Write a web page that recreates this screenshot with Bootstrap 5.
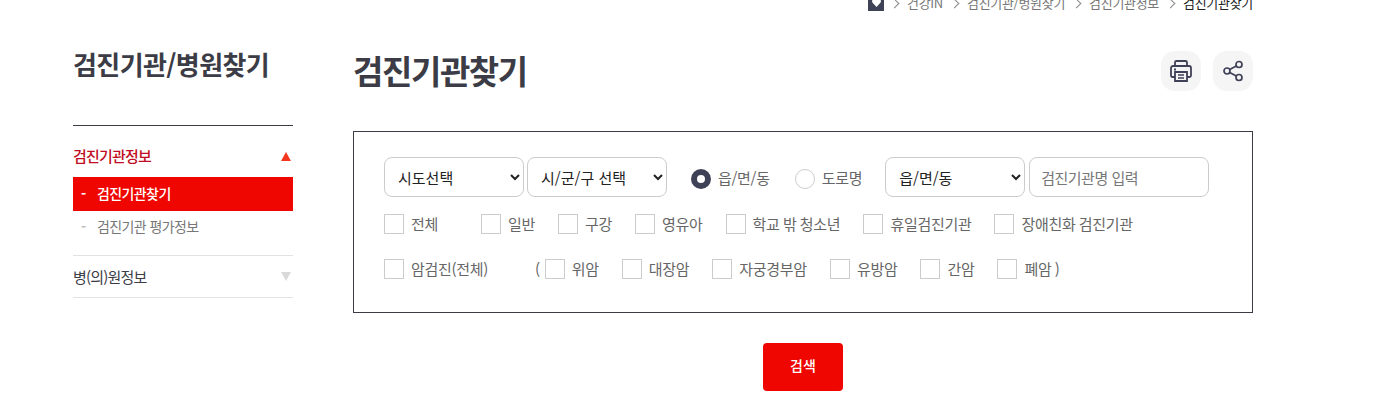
<!DOCTYPE html>
<html lang="ko">
<head>
    <meta charset="UTF-8">
    <title>검진기관찾기</title>
    <link href="https://cdn.jsdelivr.net/npm/bootstrap@5.3.0/dist/css/bootstrap.min.css" rel="stylesheet">
    <style>
        body {
          font-family: "Noto Sans CJK KR", "Noto Sans", sans-serif;
          font-size: 15px;
          color: #3c3c46;
          letter-spacing: -0.3px;
          overflow: hidden;
        }
        .page-wrap { width: 1180px; margin-left: 73px; }
        .crumbs { height: 6px; font-size: 13px; color: #777; gap: 8px; line-height: 10px; }
        .crumbs .now { color: #222; }
        .crumb-sep { width: 7px; height: 7px; border-top: 1px solid #888; border-right: 1px solid #888; transform: rotate(45deg); margin-right: 1px; }
        .home-ico { width: 16px; height: 16px; background: #3f4156; margin-right: -1px; }
        .side { width: 220px; margin-right: 60px; }
        .side-title { font-size: 26px; font-weight: 700; line-height: 38px; margin: 0 0 42px; letter-spacing: -0.6px; padding-top: 39px; }
        .side-group { border-top: 1px solid #3c3c46; padding-top: 20px; }
        .side-head { font-size: 15px; height: 20px; line-height: 20px; letter-spacing: -0.8px; padding-right: 2px; }
        .side-head.on { color: #c00d24; font-weight: 500; }
        .tri-up { width: 0; height: 0; border-left: 5.5px solid transparent; border-right: 5.5px solid transparent; border-bottom: 9px solid #f4361e; }
        .tri-down { width: 0; height: 0; border-left: 5.5px solid transparent; border-right: 5.5px solid transparent; border-top: 9px solid #d9d9d9; }
        .side-item { height: 34px; line-height: 32px; padding-left: 8px; color: #777; font-size: 14px; letter-spacing: -0.6px; }
        .side-item.on { background: #f00600; color: #fff; font-weight: 500; }
        .side-item.muted-row { line-height: 30px; }
        .side-item span { display: inline-block; width: 16px; font-weight: 700; color: #bbb; }
        .side-item.on span { color: #fff; }
        .side-sub { margin-top: 11px; padding-bottom: 10px; border-bottom: 1px solid #e2e2e2; }
        .side-last { height: 42px; border-bottom: 1px solid #e2e2e2; }
        .main-area { width: 900px; }
        .page-title { font-size: 33px; font-weight: 700; line-height: 48px; margin: 0; letter-spacing: -1.4px; }
        .title-row { height: 125px; padding-top: 40px; }
        .tool-btns { gap: 12px; }
        .round-btn { width: 40px; height: 40px; border-radius: 14px; background: #f5f5f6; margin-top: 5px; }
        .search-box { border: 1px solid #3c3c46; height: 182px; padding: 25px 30px 0; }
        .search-box .form-select, .search-box .form-control {
          height: 40px; border-radius: 8px; border-color: #ccc; font-size: 15px; color: #222; padding: 0 11px; width: 140px;
          box-shadow: none;
        }
        .search-box .form-select { appearance: auto; background-image: none; background-color: #fff; padding-left: 9px; }
        .search-box .form-control { width: 180px; margin-left: 4px; letter-spacing: -0.5px; }
        .search-box .form-control::placeholder { color: #777; }
        .sel-gap { margin-left: 3px; }
        .radio-mark { width: 20px; height: 20px; border-radius: 50%; border: 1px solid #ccc; display: inline-block; }
        .radio-mark.on { border: 6px solid #3f4156; }
        .radio-pick { gap: 7px; color: #666; margin-top: 3px; margin-left: 24px; }
        .radio-last { margin-left: 25px; margin-right: 23px; }
        .check-row { gap: 23px; color: #666; line-height: 20px; word-spacing: -0.5px; }
        .check-one { margin-top: 17px; }
        .check-two { margin-top: 25px; }
        .check-pick { gap: 7px; }
        .check-mark { width: 20px; height: 20px; border: 1px solid #ccc; display: inline-block; flex: none; }
        .wide-a { margin-right: 20px; }
        .wide-c { margin-right: 24px; }
        .wide-b { margin-right: -18px; }
        .search-btn { width: 80px; height: 48px; background: #f00600; color: #fff; border: 0; border-radius: 4px; font-size: 14px; font-weight: 500; margin-top: 30px; padding-bottom: 9px; }
    </style>
</head>
<body>

<div class="page-wrap">
    <!-- 상단 경로 -->
    <div class="crumbs d-flex justify-content-end align-items-center">
        <span class="home-ico d-flex justify-content-center align-items-center">
            <svg width="9" height="8" viewBox="0 0 9 8"><path d="M4.5 8 0.6 3.8C-0.6 2.3 0.3 0 2.2 0 3.2 0 4 .5 4.5 1.3 5 .5 5.800 0 6.800 0 8.700 0 9.600 2.300 8.400 3.800Z" fill="#fff"/></svg>
        </span>
        <i class="crumb-sep"></i><span>건강IN</span>
        <i class="crumb-sep"></i><span>검진기관/병원찾기</span>
        <i class="crumb-sep"></i><span>검진기관정보</span>
        <i class="crumb-sep"></i><span class="now">검진기관찾기</span>
    </div>

    <div class="d-flex">
        <!-- 왼쪽 메뉴 -->
        <div class="side">
            <h2 class="side-title">검진기관/병원찾기</h2>
            <div class="side-group">
                <div class="side-head on d-flex justify-content-between align-items-center">검진기관정보<i class="tri-up"></i></div>
                <div class="side-sub">
                    <div class="side-item on"><span>-</span>검진기관찾기</div>
                    <div class="side-item muted-row"><span>-</span>검진기관 평가정보</div>
                </div>
                <div class="side-last side-head d-flex justify-content-between align-items-center">병(의)원정보<i class="tri-down"></i></div>
            </div>
        </div>

        <!-- 본문 -->
        <div class="main-area">
            <div class="title-row d-flex justify-content-between align-items-start">
                <h1 class="page-title">검진기관찾기</h1>
                <div class="tool-btns d-flex">
                    <span class="round-btn d-flex justify-content-center align-items-center">
                        <svg width="24" height="24" viewBox="0 0 24 24" fill="none" stroke="#3f4156" stroke-width="1.800"><path d="M6 7V3.500A1.500 1.500 0 0 1 7.500 2H16.500A1.500 1.500 0 0 1 18 3.500V7"/><path d="M6 18H3.500A1.500 1.500 0 0 1 2 16.500V9A2 2 0 0 1 4 7H20A2 2 0 0 1 22 9V16.500A1.500 1.500 0 0 1 20.500 18H18"/><path d="M6 13H18V22H6Z"/><path d="M9 16H15M9 19H15" stroke-width="1.400"/><path d="M5 10.500H7"/></svg>
                    </span>
                    <span class="round-btn d-flex justify-content-center align-items-center">
                        <svg width="22" height="22" viewBox="0 0 22 22" fill="none" stroke="#3f4156" stroke-width="1.700"><circle cx="17" cy="4.500" r="3"/><circle cx="5" cy="11" r="3"/><circle cx="17" cy="17.500" r="3"/><path d="M7.700 9.500 14.300 6M7.700 12.500 14.300 16"/></svg>
                    </span>
                </div>
            </div>

            <div class="search-box">
                <div class="d-flex align-items-center">
                    <select class="form-select"><option>시도선택</option></select>
                    <select class="form-select sel-gap"><option>시/군/구 선택</option></select>
                    <label class="radio-pick d-flex align-items-center"><i class="radio-mark on"></i>읍/면/동</label>
                    <label class="radio-pick radio-last d-flex align-items-center"><i class="radio-mark"></i>도로명</label>
                    <select class="form-select"><option>읍/면/동</option></select>
                    <input class="form-control" type="text" placeholder="검진기관명 입력">
                </div>
                <div class="check-row check-one d-flex">
                    <label class="check-pick d-flex wide-a"><i class="check-mark"></i>전체</label>
                    <label class="check-pick d-flex"><i class="check-mark"></i>일반</label>
                    <label class="check-pick d-flex"><i class="check-mark"></i>구강</label>
                    <label class="check-pick d-flex"><i class="check-mark"></i>영유아</label>
                    <label class="check-pick d-flex"><i class="check-mark"></i>학교 밖 청소년</label>
                    <label class="check-pick d-flex"><i class="check-mark"></i>휴일검진기관</label>
                    <label class="check-pick d-flex"><i class="check-mark"></i>장애친화 검진기관</label>
                </div>
                <div class="check-row check-two d-flex">
                    <label class="check-pick d-flex wide-c"><i class="check-mark"></i>암검진(전체)</label>
                    <span class="wide-b">(</span>
                    <label class="check-pick d-flex"><i class="check-mark"></i>위암</label>
                    <label class="check-pick d-flex"><i class="check-mark"></i>대장암</label>
                    <label class="check-pick d-flex"><i class="check-mark"></i>자궁경부암</label>
                    <label class="check-pick d-flex"><i class="check-mark"></i>유방암</label>
                    <label class="check-pick d-flex"><i class="check-mark"></i>간암</label>
                    <label class="check-pick d-flex"><i class="check-mark"></i>폐암 )</label>
                </div>
            </div>

            <div class="text-center">
                <button class="search-btn btn">검색</button>
            </div>
        </div>
    </div>
</div>

<script src="https://cdn.jsdelivr.net/npm/bootstrap@5.3.0/dist/js/bootstrap.bundle.min.js"></script>
</body>
</html>
